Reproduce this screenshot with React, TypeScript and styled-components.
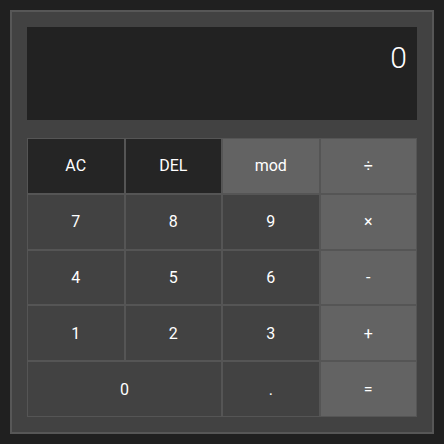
import React from "react";
import styled, { createGlobalStyle } from "styled-components";

const Global = createGlobalStyle`
  html, body { margin: 0; padding: 0; background: #202020; }
  body { font-family: Roboto, "Noto Sans", sans-serif; }
`;

const Page = styled.div`
  padding: 10px;
`;

const Panel = styled.div`
  box-sizing: border-box;
  width: 424px;
  height: 424px;
  border: 2px solid #575757;
  background: #424242;
  padding: 15px;
  display: flex;
  flex-direction: column;
  gap: 18px;
`;

const Display = styled.div`
  width: 390px;
  height: 93px;
  background: #222222;
  color: #ffffff;
  font-size: 30px;
  font-weight: 300;
  line-height: 35px;
  display: flex;
  align-items: flex-start;
  justify-content: flex-end;
  padding: 13px 10px 0 0;
  box-sizing: border-box;
`;

const Grid = styled.div`
  width: 390px;
  height: 279px;
  display: grid;
  grid-template-columns: repeat(4, 1fr);
  grid-template-rows: repeat(5, 1fr);
`;

type Kind = "dark" | "num" | "op";

const Key = styled.button<{ $kind: Kind; $span?: number }>`
  box-sizing: border-box;
  border: 1px solid #555555;
  margin: 0;
  padding: 0;
  font-family: Roboto, "Noto Sans", sans-serif;
  font-size: 16px;
  color: #ffffff;
  grid-column: span ${(p) => p.$span ?? 1};
  background: ${(p) =>
    p.$kind === "dark" ? "#252525" : p.$kind === "op" ? "#636363" : "#424242"};
`;

const keys: { label: string; kind: Kind; span?: number }[] = [
  { label: "AC", kind: "dark" },
  { label: "DEL", kind: "dark" },
  { label: "mod", kind: "op" },
  { label: "÷", kind: "op" },
  { label: "7", kind: "num" },
  { label: "8", kind: "num" },
  { label: "9", kind: "num" },
  { label: "×", kind: "op" },
  { label: "4", kind: "num" },
  { label: "5", kind: "num" },
  { label: "6", kind: "num" },
  { label: "-", kind: "op" },
  { label: "1", kind: "num" },
  { label: "2", kind: "num" },
  { label: "3", kind: "num" },
  { label: "+", kind: "op" },
  { label: "0", kind: "num", span: 2 },
  { label: ".", kind: "num" },
  { label: "=", kind: "op" },
];

export default function App() {
  return (
    <Page>
      <Global />
      <Panel>
        <Display>0</Display>
        <Grid>
          {keys.map((k) => (
            <Key key={k.label} $kind={k.kind} $span={k.span}>
              {k.label}
            </Key>
          ))}
        </Grid>
      </Panel>
    </Page>
  );
}
